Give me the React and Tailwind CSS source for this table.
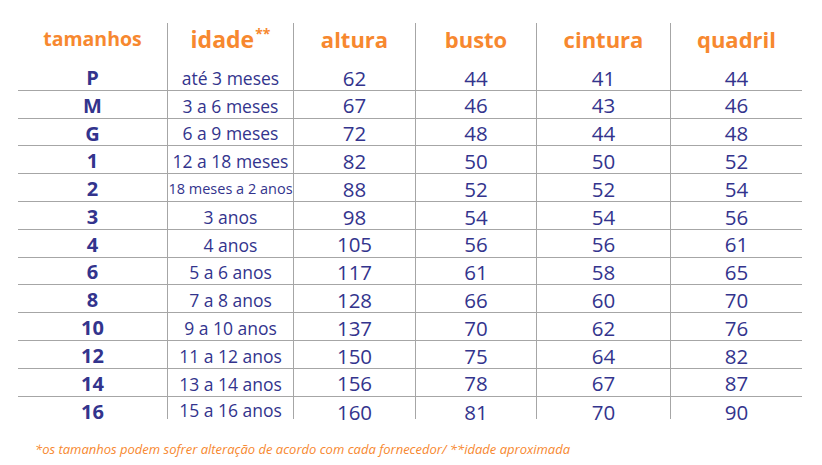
import React from 'react';

const rows = [
  ['P', 'até 3 meses', '62', '44', '41', '44'],
  ['M', '3 a 6 meses', '67', '46', '43', '46'],
  ['G', '6 a 9 meses', '72', '48', '44', '48'],
  ['1', '12 a 18 meses', '82', '50', '50', '52'],
  ['2', '18 meses a 2 anos', '88', '52', '52', '54'],
  ['3', '3 anos', '98', '54', '54', '56'],
  ['4', '4 anos', '105', '56', '56', '61'],
  ['6', '5 a 6 anos', '117', '61', '58', '65'],
  ['8', '7 a 8 anos', '128', '66', '60', '70'],
  ['10', '9 a 10 anos', '137', '70', '62', '76'],
  ['12', '11 a 12 anos', '150', '75', '64', '82'],
  ['14', '13 a 14 anos', '156', '78', '67', '87'],
  ['16', '15 a 16 anos', '160', '81', '70', '90'],
];

const widths = ['w-[149px]', 'w-[126px]', 'w-[122px]', 'w-[121px]', 'w-[134px]', 'w-[132px]'];

const App = () => {
  return (
    <div className="w-[822px] h-[465px] bg-white pt-[23px] pl-[18px] font-['Open_Sans',sans-serif] overflow-hidden">
      <div className="w-[784px]">
        {/* Header */}
        <div className="flex h-[40px] text-[#f7882f] font-bold">
          <div className={`${widths[0]} flex items-center justify-center pb-[8px] text-[19.5px]`}>tamanhos</div>
          <div className={`${widths[1]} flex items-center justify-center pb-[8px] border-l border-[#a6a6a6] text-[23px]`}>
            idade<span className="text-[14px] -mt-[12px] ml-[1px]">**</span>
          </div>
          <div className={`${widths[2]} flex items-center justify-center pb-[8px] border-l border-[#a6a6a6] text-[22px]`}>altura</div>
          <div className={`${widths[3]} flex items-center justify-center pb-[8px] border-l border-[#a6a6a6] text-[22px]`}>busto</div>
          <div className={`${widths[4]} flex items-center justify-center pb-[8px] border-l border-[#a6a6a6] text-[22px]`}>cintura</div>
          <div className={`${widths[5]} flex items-center justify-center pb-[8px] border-l border-[#a6a6a6] text-[22px]`}>quadril</div>
        </div>

        {/* Rows */}
        {rows.map((row, i) => {
          const last = i === rows.length - 1;
          return (
            <div
              key={i}
              className={`flex text-[#33348d] ${last ? 'h-[22.4px] items-start' : 'h-[27.8px] items-center border-b border-[#a6a6a6]'}`}
            >
              {row.map((cell, j) => (
                <div
                  key={j}
                  className={`${widths[j]} h-full flex justify-center ${last ? 'items-start' : 'items-center pt-[3px]'} ${j > 0 ? 'border-l border-[#a6a6a6]' : ''} ${
                    j === 0 ? 'font-bold text-[20px]' : j === 1 ? (cell.length > 14 ? 'text-[14.5px]' : 'text-[17.5px]') : 'text-[20.5px]'
                  } whitespace-nowrap`}
                >
                  {cell}
                </div>
              ))}
            </div>
          );
        })}
      </div>

      {/* Footnote */}
      <p className="mt-[21px] ml-[17px] text-[13px] italic text-[#f7882f]">
        *os tamanhos podem sofrer alteração de acordo com cada fornecedor/ **idade aproximada
      </p>
    </div>
  );
};

export default App;
